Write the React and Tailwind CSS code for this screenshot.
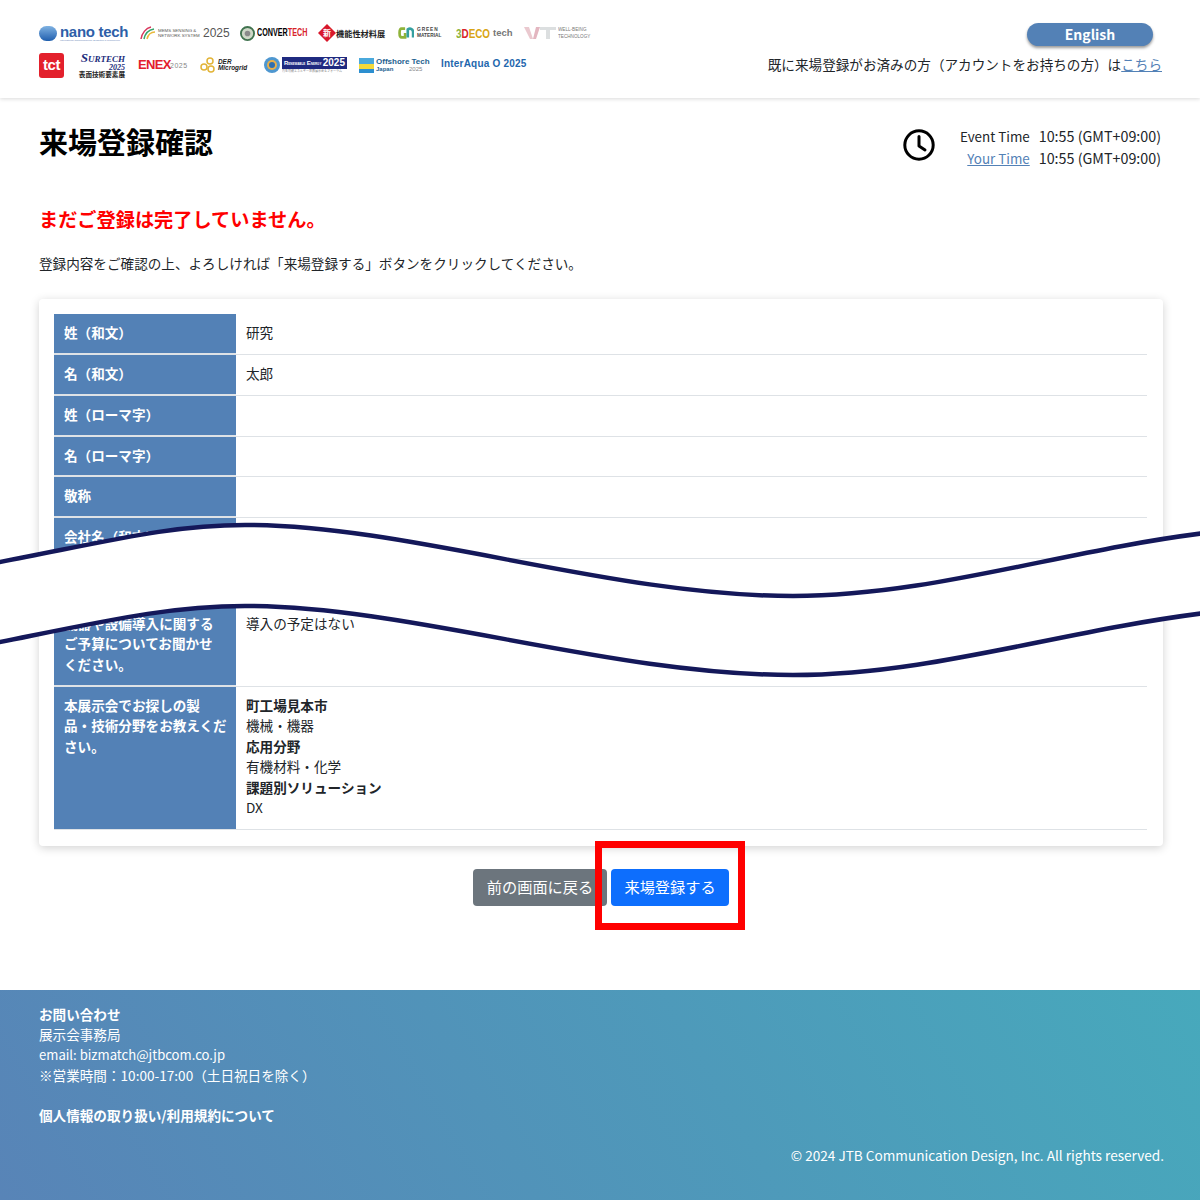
const font = { fontFamily: '"Noto Sans CJK JP", "Open Sans", sans-serif' };

const rows = [
  ['姓（和文）', '研究', 'h-[41px]'],
  ['名（和文）', '太郎', 'h-[41px]'],
  ['姓（ローマ字）', '', 'h-[41px]'],
  ['名（ローマ字）', '', 'h-[40px]'],
  ['敬称', '', 'h-[41px]'],
  ['会社名（和文）', '', 'h-[41px]'],
  ['会社名（英文）', '', 'h-[46px]'],
];

function Row({ label, value, height }) {
  return (
    <div className={`flex border-b border-[#dee2e6] ${height}`}>
      <div className="w-[182px] shrink-0 bg-[#5381b6] border-b border-[#dee2e6] pl-[10px] pr-[8px] py-[8px] text-[13.6px] leading-[20.4px] font-bold text-white">{label}</div>
      <div className="flex-1 px-[10px] py-[8px] text-[13.6px] leading-[20.4px] text-[#212529]">{value}</div>
    </div>
  );
}

function Logos() {
  return (
    <div className="flex flex-col gap-[8px]">
      <div className="flex items-center h-[24px] whitespace-nowrap" style={{ fontFamily: '"Liberation Sans", sans-serif' }}>
        <span className="shrink-0 w-[18px] h-[15px] rounded-full bg-gradient-to-b from-[#7fb2e2] to-[#1f5fae]" />
        <span className="ml-[3px] w-[69px] shrink-0 flex flex-col">
          <span className="text-[15px] leading-[15px] font-bold text-[#2e5fa8] tracking-[-0.3px]">nano tech</span>
          <span className="text-[2.5px] leading-[3px] text-[#6b86b8]">International Nanotechnology Exhibition &amp; Conference</span>
        </span>
        <svg className="ml-[11px] shrink-0" width="16" height="14" viewBox="0 0 16 14" fill="none" strokeWidth="1.5">
          <path d="M1 13C2 7 6 2 11 1" stroke="#d8365c" />
          <path d="M4 13C5 8 8 4 14 3" stroke="#35a36b" />
          <path d="M7 13C8 9 11 6 15 6" stroke="#e8b93a" />
        </svg>
        <span className="ml-[2px] w-[43px] shrink-0 text-[4.4px] leading-[5px] text-[#555]">MEMS SENSING &amp;<br />NETWORK SYSTEM</span>
        <span className="ml-[2px] w-[26px] shrink-0 text-[12px] text-[#555]">2025</span>
        <svg className="ml-[11px] shrink-0" width="15" height="15" viewBox="0 0 16 16">
          <circle cx="8" cy="8" r="7" fill="#cfd8c8" stroke="#41734f" strokeWidth="2" />
          <circle cx="8" cy="8" r="3" fill="#8a8a8a" />
        </svg>
        <span className="ml-[2px] w-[48px] shrink-0 inline-block origin-left scale-x-[0.72] text-[10px] font-bold text-black leading-none">CONVER<span className="text-[#d8232a]">TECH</span></span>
        <span className="relative ml-[13px] w-[18px] h-[18px] shrink-0 flex items-center justify-center">
          <svg className="absolute inset-0" width="18" height="18" viewBox="0 0 20 20"><path d="M10 0L20 10L10 20L0 10Z" fill="#d8172b" /></svg>
          <span className="relative text-[8px] leading-none font-bold text-white" style={font}>新</span>
        </span>
        <span className="w-[49px] shrink-0 text-[8.2px] font-bold text-[#222]" style={font}>機能性材料展</span>
        <svg className="ml-[13px] shrink-0" width="16" height="14" viewBox="0 0 18 14" fill="none"><path d="M8 2H4C1 2 1 12 4 12H8V7" stroke="#8fb33a" strokeWidth="3" /><path d="M11 12V3C14 1 17 3 17 6V12" stroke="#35a0a0" strokeWidth="3" /></svg>
        <span className="ml-[3px] w-[26px] shrink-0 text-[4.8px] leading-[6px] font-bold text-[#444]"><span className="tracking-[0.9px]">GREEN</span><br />MATERIAL</span>
        <span className="ml-[13px] w-[35px] shrink-0 inline-block origin-left scale-x-[0.76] text-[13px] font-bold leading-none"><span className="text-[#8fb33a]">3</span><span className="text-[#d8232a]">D</span><span className="text-[#d9a514]">ECO</span></span>
        <span className="ml-[2px] w-[19px] shrink-0 text-[9.5px] font-bold text-[#777]">tech</span>
        <svg className="ml-[12px] shrink-0" width="32" height="14" viewBox="0 0 32 14"><path d="M0 1H5L9 13H6Z" fill="#eac9cf" /><path d="M9 13L12 1H14L16 1L12 13Z" fill="#e3b6c0" /><path d="M16 1H32V4H26V13H22V4H16Z" fill="#dcdfe0" /></svg>
        <span className="ml-[2px] w-[33px] shrink-0 inline-block origin-left scale-x-[0.77] text-[6px] leading-[7px] text-[#777]">WELL-BEING<br />TECHNOLOGY</span>
      </div>
      <div className="flex items-center h-[24px] whitespace-nowrap" style={{ fontFamily: '"Liberation Sans", sans-serif' }}>
        <span className="shrink-0 w-[25px] h-[25px] rounded-[3px] bg-[#e3202c] text-white text-[15px] font-bold flex items-center justify-center tracking-[-0.5px]">tct</span>
        <span className="ml-[13px] w-[48px] shrink-0 flex flex-col items-end text-[#1c2d7c]" style={{ fontFamily: '"Liberation Serif", serif' }}>
          <span className="text-[9px] leading-[9px] font-bold italic"><span className="text-[13px] leading-[9px]">S</span>URTECH</span>
          <span className="text-[8px] leading-[7px] font-bold italic">2025</span>
          <span className="text-[6.6px] leading-[7px] font-bold text-[#222]" style={font}>表面技術要素展</span>
        </span>
        <span className="ml-[13px] w-[31px] shrink-0 text-[13px] font-bold text-[#e3202c] tracking-[-0.7px]">ENEX</span>
        <span className="ml-[1px] w-[17px] shrink-0 mt-[3px] text-[7px] tracking-[0.5px] text-[#888]">2025</span>
        <svg className="ml-[13px] shrink-0" width="17" height="17" viewBox="0 0 17 17" fill="none" stroke="#e2b437" strokeWidth="1.5"><circle cx="10" cy="4" r="3" /><circle cx="4" cy="10" r="3" /><circle cx="11" cy="12" r="3" /></svg>
        <span className="ml-[1px] w-[31px] shrink-0 text-[6.4px] leading-[6px] font-bold italic text-[#222]">DER<br />Microgrid</span>
        <svg className="ml-[14px] shrink-0" width="18" height="18" viewBox="0 0 18 18"><circle cx="9" cy="9" r="8" fill="#4e97d0" /><circle cx="9" cy="9" r="5" fill="#e8b04a" /><circle cx="9" cy="9" r="3" fill="#2f6fb0" /></svg>
        <span className="ml-[1px] w-[65px] shrink-0 flex flex-col">
          <span className="h-[12px] bg-[#1f2a80] text-white font-bold px-[2px] flex items-center justify-between overflow-hidden">
            <span className="text-[5px] leading-none"><span className="text-[6px]">R</span><span className="text-[3px]">ENEWABLE</span> <span className="text-[6px]">E</span><span className="text-[3px]">NERGY</span></span>
            <span className="text-[10px] leading-none">2025</span>
          </span>
          <span className="text-[3px] leading-[4px] text-[#777] overflow-hidden" style={font}>再生可能エネルギー世界展示会＆フォーラム</span>
        </span>
        <svg className="ml-[12px] shrink-0" width="15" height="15" viewBox="0 0 15 15"><rect width="15" height="6" fill="#4aa9dc" /><rect y="6" width="15" height="5" fill="#f3d93b" /><rect y="11" width="15" height="4" fill="#2c8fd0" /></svg>
        <span className="ml-[2px] w-[53px] shrink-0 flex flex-col leading-none">
          <span className="text-[8px] font-bold text-[#1d5f8f]">Offshore Tech</span>
          <span className="text-[6px] font-bold text-[#1d5f8f]">Japan <span className="ml-[14px] font-normal text-[#888]">2025</span></span>
        </span>
        <span className="ml-[12px] mb-[3px] shrink-0 text-[10px] font-bold text-[#1e66ad] tracking-[0.2px]">InterAqua O 2025</span>
      </div>
    </div>
  );
}

export default function App() {
  return (
    <div className="relative w-[1200px] h-[1200px] overflow-hidden bg-white text-[#212529]" style={font}>
      <header className="h-[98px] flex justify-between pl-[39px] pr-[38px] pt-[21px] shadow-[0_1px_4px_rgba(0,0,0,0.15)]">
        <Logos />
        <div className="flex flex-col items-end">
          <button className="w-[126px] h-[23px] mt-[2px] mr-[9px] pb-[1px] rounded-full bg-[#5381b6] text-white text-[14px] font-bold shadow-[0_2px_3px_rgba(0,0,0,0.4)]">English</button>
          <p className="mt-[8px] text-[13.6px] leading-[20px] whitespace-nowrap">既に来場登録がお済みの方（アカウントをお持ちの方）は<a className="text-[#5381b6] underline">こちら</a></p>
        </div>
      </header>

      <main className="px-[39px]">
        <div className="flex justify-between pt-[24px] h-[84px]">
          <h1 className="text-[29px] leading-[38px] font-bold text-black">来場登録確認</h1>
          <div className="flex items-start mt-[3px]">
            <svg className="mt-[4px] mr-[25px]" width="32" height="32" viewBox="0 0 32 32" fill="none" stroke="#000" strokeWidth="3">
              <circle cx="16" cy="16" r="14.2" />
              <path d="M16 7.5V17L22 21" strokeLinecap="round" strokeLinejoin="round" />
            </svg>
            <div className="grid grid-cols-[auto_auto] gap-x-[9px] text-[14.3px] leading-[22px]">
              <span className="text-right text-[13.4px]">Event Time</span>
              <span>10:55 (GMT+09:00)</span>
              <a className="text-right text-[13.4px] text-[#5381b6] underline">Your Time</a>
              <span>10:55 (GMT+09:00)</span>
            </div>
          </div>
        </div>
        <p className="mt-[22px] text-[19.2px] leading-[30px] font-bold text-[#ff0000]">まだご登録は完了していません。</p>
        <p className="mt-[19px] text-[13.6px] leading-[20px]">登録内容をご確認の上、よろしければ「来場登録する」ボタンをクリックしてください。</p>

        <section className="mt-[26px] w-[1124px] rounded-[4px] bg-white pl-[15px] pr-[16px] pt-[15px] pb-[16px] shadow-[0_2px_10px_rgba(0,0,0,0.18)]">
          {rows.map(([label, value, height]) => (
            <Row key={label} label={label} value={value} height={height} />
          ))}
          <Row label={<>機器や設備導入に関する<br />ご予算についてお聞かせ<br />ください。</>} value="導入の予定はない" height="h-[82px]" />
          <div className="flex border-b border-[#dee2e6] h-[143px]">
            <div className="w-[182px] shrink-0 bg-[#5381b6] pl-[10px] pr-[8px] py-[8px] text-[13.6px] leading-[20.4px] font-bold text-white">本展示会でお探しの製<br />品・技術分野をお教えくだ<br />さい。</div>
            <div className="flex-1 px-[10px] py-[8px] text-[13.6px] leading-[20.4px]">
              <p className="font-bold">町工場見本市</p>
              <p>機械・機器</p>
              <p className="font-bold">応用分野</p>
              <p>有機材料・化学</p>
              <p className="font-bold">課題別ソリューション</p>
              <p>DX</p>
            </div>
          </div>
        </section>

        <div className="mt-[23px] flex justify-center gap-[4px] pl-[2px]">
          <button className="w-[134px] h-[37px] pb-[3px] rounded-[4px] bg-[#6c757d] text-[15.2px] text-white">前の画面に戻る</button>
          <button className="w-[118px] h-[37px] pb-[3px] rounded-[4px] bg-[#0d6efd] text-[15.2px] text-white">来場登録する</button>
        </div>
      </main>

      <footer className="absolute left-0 right-0 bottom-0 h-[210px] bg-[linear-gradient(60deg,#5884b7,#47a9bc)] px-[36px] pt-[14px] text-[13.6px] leading-[20.4px] text-white">
        <div className="pl-[3px]">
          <p className="font-bold">お問い合わせ</p>
          <p>展示会事務局</p>
          <p className="text-[13.1px]">email: bizmatch@jtbcom.co.jp</p>
          <p>※営業時間：10:00-17:00（土日祝日を除く）</p>
          <p className="mt-[19px] font-bold">個人情報の取り扱い/利用規約について</p>
        </div>
        <p className="mt-[20px] text-right">© 2024 JTB Communication Design, Inc. All rights reserved.</p>
      </footer>

      <svg className="absolute left-0 top-[515px] pointer-events-none" width="1200" height="175" viewBox="0 0 1200 175" fill="none">
        <path d="M-5 48C110 26 170 10 245 10C410 10 610 81 793 81C930 81 1060 36 1205 18V98C1060 116 930 160 793 160C610 160 410 91 245 91C170 91 110 105 -5 128Z" fill="#fff" />
        <path d="M-5 48C110 26 170 10 245 10C410 10 610 81 793 81C930 81 1060 36 1205 18" stroke="#14185a" strokeWidth="4.5" />
        <path d="M-5 128C110 105 170 91 245 91C410 91 610 160 793 160C930 160 1060 116 1205 98" stroke="#14185a" strokeWidth="4.5" />
      </svg>

      <div className="absolute left-[595px] top-[841px] w-[150px] h-[89px] border-[7px] border-[#ff0000]" />
    </div>
  );
}
